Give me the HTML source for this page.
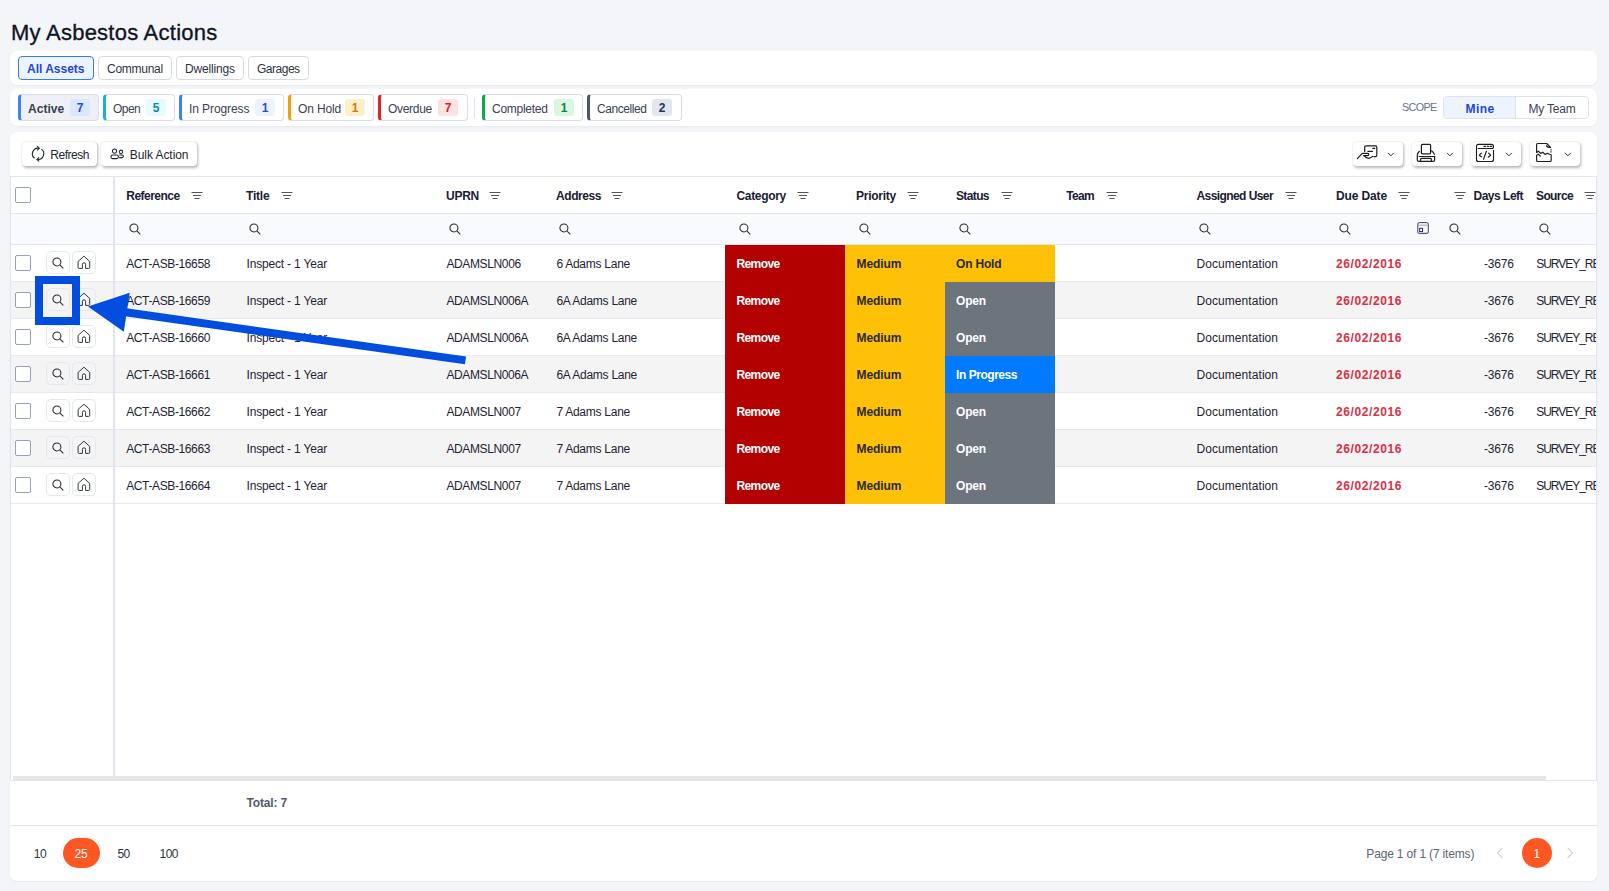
<!DOCTYPE html><html><head><meta charset="utf-8"><style>
*{box-sizing:border-box}
html,body{margin:0;padding:0}
body{width:1609px;height:891px;background:#f4f5f9;font-family:"Liberation Sans",sans-serif;position:relative;overflow:hidden;color:#1e2433}
.abs{position:absolute}
.t{position:absolute;white-space:nowrap;font-size:12px;line-height:14px}
.card{position:absolute;left:10px;width:1587px;background:#fff;border-radius:7px;box-shadow:0 1px 2px rgba(30,40,70,.06)}
h1{position:absolute;left:11px;top:20px;margin:0;font-size:22px;font-weight:400;line-height:26px;color:#0f1526;letter-spacing:0.25px;-webkit-text-stroke:0.35px #0f1526;white-space:nowrap}
.tab{position:absolute;top:5px;height:24px;border:1px solid #d5d9e2;border-radius:4px}
.tab.on{border-color:#3b7bf0;background:#eef4ff}
.st{position:absolute;top:5px;height:27px;border:1px solid #d9dde6;border-left-width:3px;border-radius:4px}
.bd{position:absolute;top:9px;height:17px;border-radius:3px;font-size:12px;font-weight:700;line-height:18px;text-align:center}
.btn{position:absolute;top:10px;height:24px;background:#fff;border-radius:4px;box-shadow:1px 1.5px 3px rgba(0,0,0,.28),0 0 1px rgba(0,0,0,.12)}
.grid{position:absolute;left:0;top:44px;width:1587px;height:604px;border-top:1px solid #e3e6ee;border-right:1px solid #e3e6ee;overflow:hidden}
.hd{font-weight:700;color:#1a2035}
.rowl{position:absolute;left:0;width:1587px;height:37px;border-bottom:1px solid #e6e9f0}
.cb{position:absolute;width:16px;height:16px;border:1px solid #97a0bd;border-radius:2px;background:#fff}
.ib{position:absolute;width:24px;height:23px;border:1px solid #e4e8f0;border-radius:5px}
.ib svg{position:absolute}
.cc{position:absolute;height:37px}
</style></head><body>

<h1>My Asbestos Actions</h1>
<div class="card" style="top:51px;height:34px">
<div class="tab on" style="left:8px;width:76px"></div>
<div class="t" style="left:17px;top:11.14px;font-size:12px;line-height:14px;font-weight:700;color:#1f46d8;letter-spacing:-0.008px">All Assets</div>
<div class="tab" style="left:88px;width:74px"></div>
<div class="t" style="left:97px;top:11.14px;font-size:12px;line-height:14px;color:#2b3345;letter-spacing:-0.265px">Communal</div>
<div class="tab" style="left:166px;width:68px"></div>
<div class="t" style="left:175px;top:11.14px;font-size:12px;line-height:14px;color:#2b3345;letter-spacing:-0.184px">Dwellings</div>
<div class="tab" style="left:238px;width:61px"></div>
<div class="t" style="left:247px;top:11.14px;font-size:12px;line-height:14px;color:#2b3345;letter-spacing:-0.49px">Garages</div>
</div>
<div class="card" style="top:89px;height:37px">
<div class="st" style="left:8px;width:81px;border-left-color:#3b82f6;background:#eef0f5"></div>
<div class="t" style="left:18px;top:12.94px;font-size:12px;line-height:14px;font-weight:700;color:#374151;letter-spacing:0.047px">Active</div>
<div class="bd" style="left:60px;width:20px;top:10px;background:#dbe7fd;color:#1e4fd8">7</div>
<div class="st" style="left:93px;width:72px;border-left-color:#17b3cf;background:#fff"></div>
<div class="t" style="left:103px;top:12.94px;font-size:12px;line-height:14px;color:#3a4254;letter-spacing:-0.564px">Open</div>
<div class="bd" style="left:136px;width:20px;top:10px;background:#e6fbfd;color:#0f8aa0">5</div>
<div class="st" style="left:169px;width:105px;border-left-color:#3b82f6;background:#fff"></div>
<div class="t" style="left:179px;top:12.94px;font-size:12px;line-height:14px;color:#3a4254;letter-spacing:-0.087px">In Progress</div>
<div class="bd" style="left:245px;width:20px;top:10px;background:#edf3fe;color:#1e4fd8">1</div>
<div class="st" style="left:278px;width:86px;border-left-color:#f59e0b;background:#fff"></div>
<div class="t" style="left:288px;top:12.94px;font-size:12px;line-height:14px;color:#3a4254;letter-spacing:-0.146px">On Hold</div>
<div class="bd" style="left:335px;width:20px;top:10px;background:#fdf0c8;color:#d97706">1</div>
<div class="st" style="left:368px;width:90px;border-left-color:#e02424;background:#fff"></div>
<div class="t" style="left:378px;top:12.94px;font-size:12px;line-height:14px;color:#3a4254;letter-spacing:-0.304px">Overdue</div>
<div class="bd" style="left:428px;width:20px;top:10px;background:#fde2e2;color:#d61f1f">7</div>
<div class="st" style="left:472px;width:101px;border-left-color:#16a34a;background:#fff"></div>
<div class="t" style="left:482px;top:12.94px;font-size:12px;line-height:14px;color:#3a4254;letter-spacing:-0.27px">Completed</div>
<div class="bd" style="left:544px;width:20px;top:10px;background:#d9f7e3;color:#15803d">1</div>
<div class="st" style="left:577px;width:95px;border-left-color:#475569;background:#fff"></div>
<div class="t" style="left:587px;top:12.94px;font-size:12px;line-height:14px;color:#3a4254;letter-spacing:-0.419px">Cancelled</div>
<div class="bd" style="left:642px;width:20px;top:10px;background:#e2e7ef;color:#27344a">2</div>
<div class="abs" style="left:464px;top:9px;width:1px;height:20px;background:#dfe2e8"></div>
<div class="t" style="left:1392px;top:12.36px;font-size:10.8px;line-height:13px;color:#64748b;letter-spacing:-0.642px">SCOPE</div>
<div class="abs" style="left:1433px;top:7px;width:146px;height:23px;border:1px solid #dfe3ea;border-radius:4px;overflow:hidden;background:#fff"><div class="abs" style="left:0;top:0;width:72px;height:21px;background:#edf4fe;border-right:1px solid #dfe3ea"></div></div>
<div class="t" style="left:1455.5px;top:12.64px;font-size:12px;line-height:14px;font-weight:700;color:#1f46d8;letter-spacing:0.416px">Mine</div>
<div class="t" style="left:1518.5px;top:12.64px;font-size:12px;line-height:14px;color:#3a4254;letter-spacing:-0.208px">My Team</div>
</div>
<div class="card" style="top:132px;height:749px">
<div class="btn" style="left:12px;width:75px"><span class="abs" style="left:9px;top:3px;line-height:0"><svg width="16" height="18" viewBox="0 0 16 18"><g stroke="#1e2433" stroke-width="1.1" fill="none"><path d="M3.5 13.3A5.7 5.7 0 0 1 7.6 3.2"/><path d="M10.4 4.1A5.7 5.7 0 0 1 6.6 14.4"/><path d="M6.1 1.1L8.3 3.2L6.2 5.4"/><path d="M8.1 12.3L5.9 14.4L8.2 16.4"/></g></svg></span></div>
<div class="t" style="left:40.3px;top:16.04px;font-size:12px;line-height:14px;letter-spacing:-0.489px">Refresh</div>
<div class="btn" style="left:91px;width:96px"><span class="abs" style="left:9px;top:6px;line-height:0"><svg width="16" height="13" viewBox="0 0 16 13"><g stroke="#1e2433" stroke-width="1.05" fill="none"><circle cx="4.5" cy="3.1" r="2.1"/><rect x="0.9" y="6.9" width="7.5" height="3.7" rx="1.85"/><circle cx="11" cy="3.8" r="1.7"/><path d="M9.2 7H12.1A1.3 1.3 0 0 1 12.1 9.6H9.2"/></g></svg></span></div>
<div class="t" style="left:119.69999999999999px;top:16.04px;font-size:12px;line-height:14px;letter-spacing:-0.052px">Bulk Action</div>
<div class="btn" style="left:1343px;width:50px"><span class="abs" style="left:2px;top:1px;line-height:0"><svg width="25" height="19" viewBox="0 0 25 19"><g stroke="#1e1e1e" stroke-width="1.2" fill="none" stroke-linecap="round" stroke-linejoin="round"><path d="M9.7 8.5V4.2Q9.7 2.9 11 2.9H20.5Q21.8 2.9 21.8 4.2V12.5Q21.8 13.7 20.5 13.7H18.8"/><path d="M17.8 5.4H19.6M12.9 8.3H17.6"/><path d="M2.3 15.6L7.3 10.4H12.6Q13.8 10.4 13.8 11.5Q13.8 12.6 12.6 12.6H8.5"/><path d="M9.4 12.9Q11 15.3 13.5 15.3Q15.8 15.3 17.6 13.4"/></g></svg></span><span class="abs" style="left:34px;top:10px;line-height:0"><svg width="8" height="5" viewBox="0 0 8 5"><path d="M1 0.9L3.9 3.8L6.8 0.9" stroke="#2a3040" stroke-width="1" fill="none"/></svg></span></div>
<div class="btn" style="left:1402px;width:50px"><span class="abs" style="left:2px;top:0px;line-height:0"><svg width="25" height="22" viewBox="0 0 25 22"><g stroke="#1e1e1e" stroke-width="1.2" fill="none" stroke-linecap="round" stroke-linejoin="round"><rect x="7.4" y="2.4" width="9.2" height="9.4" rx="1"/><path d="M5.4 9.3Q3.3 11 3.3 13.5V18Q3.3 19.3 4.6 19.3H19.3Q20.6 19.3 20.6 18V14.5M20.4 12.4Q19.6 10.2 17.5 8.8"/><path d="M5.2 14.5H20.8"/><path d="M6.5 19.3V17.4Q6.5 16.4 7.5 16.4H16.4Q17.4 16.4 17.4 17.4V19.3"/></g></svg></span><span class="abs" style="left:34px;top:10px;line-height:0"><svg width="8" height="5" viewBox="0 0 8 5"><path d="M1 0.9L3.9 3.8L6.8 0.9" stroke="#2a3040" stroke-width="1" fill="none"/></svg></span></div>
<div class="btn" style="left:1461px;width:50px"><span class="abs" style="left:2px;top:0px;line-height:0"><svg width="25" height="22" viewBox="0 0 25 22"><g stroke="#1e1e1e" stroke-width="1.15" fill="none" stroke-linecap="round" stroke-linejoin="round"><path d="M20.5 8.2V17.5Q20.5 19.5 18.5 19.5H5.5Q3.5 19.5 3.5 17.5V4.3Q3.5 2.3 5.5 2.3H18.5Q20.5 2.3 20.5 4.4Q20.5 6.5 18.5 6.5H5.2"/><path d="M11 4.4H12.4M14.2 4.4H15.4M17.2 4.4H18.5"/><path d="M8.4 11.2L6.3 13.2L8.4 14.8M15.6 11.2L17.6 13.2L15.2 15.2M13.4 9.2L10.5 17.2"/></g></svg></span><span class="abs" style="left:34px;top:10px;line-height:0"><svg width="8" height="5" viewBox="0 0 8 5"><path d="M1 0.9L3.9 3.8L6.8 0.9" stroke="#2a3040" stroke-width="1" fill="none"/></svg></span></div>
<div class="btn" style="left:1520px;width:50px"><span class="abs" style="left:2px;top:-1px;line-height:0"><svg width="25" height="24" viewBox="0 0 25 24"><g stroke="#1e1e1e" stroke-width="1.15" fill="none" stroke-linecap="round" stroke-linejoin="round"><path d="M4.6 11.5V3.5Q4.6 2.5 5.6 2.5H14.7L18.6 6.5"/><path d="M14.5 4.6Q14.6 6.3 18.4 6.5"/><path d="M19 8.2V11.3" stroke-dasharray="1 1.2" stroke-width="0.9"/><path d="M4.6 11.5L6.3 10.2L8.8 12.5L10.7 11.2L13.3 13.5L15.2 12.2L17.5 13.3L19.2 13.8V19.5Q19.2 20.5 18.2 20.5H5.6Q4.6 20.5 4.6 19.5V14.3L6.3 13.2L8.4 15.1"/></g></svg></span><span class="abs" style="left:34px;top:10px;line-height:0"><svg width="8" height="5" viewBox="0 0 8 5"><path d="M1 0.9L3.9 3.8L6.8 0.9" stroke="#2a3040" stroke-width="1" fill="none"/></svg></span></div>
<div class="grid">
<div class="rowl" style="top:0;height:37px;border-bottom:1px solid #e2e6ee"></div>
<div class="rowl" style="top:37px;height:31px;background:#f9fafd;border-bottom:1px solid #e2e6ee"></div>
<div class="rowl" style="top:68px;background:#fff"></div>
<div class="rowl" style="top:105px;background:#f4f4f4"></div>
<div class="rowl" style="top:142px;background:#fff"></div>
<div class="rowl" style="top:179px;background:#f4f4f4"></div>
<div class="rowl" style="top:216px;background:#fff"></div>
<div class="rowl" style="top:253px;background:#f4f4f4"></div>
<div class="rowl" style="top:290px;background:#fff"></div>
<div class="abs" style="left:103px;top:0;width:2px;height:604px;background:#e1e4ed"></div>
<div class="abs" style="left:0;top:0;width:1px;height:604px;background:#e3e6ee"></div>
<div class="cb" style="left:5px;top:10px"></div>
<div class="t" style="left:116.3px;top:12.14px;font-size:12px;line-height:14px;font-weight:700;color:#1a2035;letter-spacing:-0.526px">Reference</div>
<span class="abs" style="left:181px;top:15px;line-height:0"><svg width="12" height="8" viewBox="0 0 12 8"><path d="M0.5 0.5h11M2 3.5h8M3.5 6.5h5" stroke="#555" stroke-width="1" fill="none"/></svg></span>
<div class="t" style="left:236px;top:12.14px;font-size:12px;line-height:14px;font-weight:700;color:#1a2035;letter-spacing:-0.191px">Title</div>
<span class="abs" style="left:271px;top:15px;line-height:0"><svg width="12" height="8" viewBox="0 0 12 8"><path d="M0.5 0.5h11M2 3.5h8M3.5 6.5h5" stroke="#555" stroke-width="1" fill="none"/></svg></span>
<div class="t" style="left:436px;top:12.14px;font-size:12px;line-height:14px;font-weight:700;color:#1a2035;letter-spacing:-0.251px">UPRN</div>
<span class="abs" style="left:479px;top:15px;line-height:0"><svg width="12" height="8" viewBox="0 0 12 8"><path d="M0.5 0.5h11M2 3.5h8M3.5 6.5h5" stroke="#555" stroke-width="1" fill="none"/></svg></span>
<div class="t" style="left:546px;top:12.14px;font-size:12px;line-height:14px;font-weight:700;color:#1a2035;letter-spacing:-0.431px">Address</div>
<span class="abs" style="left:601px;top:15px;line-height:0"><svg width="12" height="8" viewBox="0 0 12 8"><path d="M0.5 0.5h11M2 3.5h8M3.5 6.5h5" stroke="#555" stroke-width="1" fill="none"/></svg></span>
<div class="t" style="left:726.4px;top:12.14px;font-size:12px;line-height:14px;font-weight:700;color:#1a2035;letter-spacing:-0.302px">Category</div>
<span class="abs" style="left:787px;top:15px;line-height:0"><svg width="12" height="8" viewBox="0 0 12 8"><path d="M0.5 0.5h11M2 3.5h8M3.5 6.5h5" stroke="#555" stroke-width="1" fill="none"/></svg></span>
<div class="t" style="left:846.1px;top:12.14px;font-size:12px;line-height:14px;font-weight:700;color:#1a2035;letter-spacing:-0.277px">Priority</div>
<span class="abs" style="left:897px;top:15px;line-height:0"><svg width="12" height="8" viewBox="0 0 12 8"><path d="M0.5 0.5h11M2 3.5h8M3.5 6.5h5" stroke="#555" stroke-width="1" fill="none"/></svg></span>
<div class="t" style="left:946px;top:12.14px;font-size:12px;line-height:14px;font-weight:700;color:#1a2035;letter-spacing:-0.629px">Status</div>
<span class="abs" style="left:991px;top:15px;line-height:0"><svg width="12" height="8" viewBox="0 0 12 8"><path d="M0.5 0.5h11M2 3.5h8M3.5 6.5h5" stroke="#555" stroke-width="1" fill="none"/></svg></span>
<div class="t" style="left:1056.2px;top:12.14px;font-size:12px;line-height:14px;font-weight:700;color:#1a2035;letter-spacing:-0.665px">Team</div>
<span class="abs" style="left:1096px;top:15px;line-height:0"><svg width="12" height="8" viewBox="0 0 12 8"><path d="M0.5 0.5h11M2 3.5h8M3.5 6.5h5" stroke="#555" stroke-width="1" fill="none"/></svg></span>
<div class="t" style="left:1186.5px;top:12.14px;font-size:12px;line-height:14px;font-weight:700;color:#1a2035;letter-spacing:-0.58px">Assigned User</div>
<span class="abs" style="left:1275px;top:15px;line-height:0"><svg width="12" height="8" viewBox="0 0 12 8"><path d="M0.5 0.5h11M2 3.5h8M3.5 6.5h5" stroke="#555" stroke-width="1" fill="none"/></svg></span>
<div class="t" style="left:1326px;top:12.14px;font-size:12px;line-height:14px;font-weight:700;color:#1a2035;letter-spacing:-0.127px">Due Date</div>
<span class="abs" style="left:1388px;top:15px;line-height:0"><svg width="12" height="8" viewBox="0 0 12 8"><path d="M0.5 0.5h11M2 3.5h8M3.5 6.5h5" stroke="#555" stroke-width="1" fill="none"/></svg></span>
<div class="t" style="left:1463.5px;top:12.14px;font-size:12px;line-height:14px;font-weight:700;color:#1a2035;letter-spacing:-0.491px">Days Left</div>
<span class="abs" style="left:1444px;top:15px;line-height:0"><svg width="12" height="8" viewBox="0 0 12 8"><path d="M0.5 0.5h11M2 3.5h8M3.5 6.5h5" stroke="#555" stroke-width="1" fill="none"/></svg></span>
<div class="t" style="left:1526px;top:12.14px;font-size:12px;line-height:14px;font-weight:700;color:#1a2035;letter-spacing:-0.614px">Source</div>
<span class="abs" style="left:1574px;top:15px;line-height:0"><svg width="12" height="8" viewBox="0 0 12 8"><path d="M0.5 0.5h11M2 3.5h8M3.5 6.5h5" stroke="#555" stroke-width="1" fill="none"/></svg></span>
<span class="abs" style="left:119px;top:46px;line-height:0"><svg width="13" height="13" viewBox="0 0 13 13"><circle cx="4.9" cy="4.9" r="4" stroke="#262b36" stroke-width="1.05" fill="none"/><path d="M7.8 7.8L11.3 11.3" stroke="#262b36" stroke-width="1.05"/></svg></span>
<span class="abs" style="left:239px;top:46px;line-height:0"><svg width="13" height="13" viewBox="0 0 13 13"><circle cx="4.9" cy="4.9" r="4" stroke="#262b36" stroke-width="1.05" fill="none"/><path d="M7.8 7.8L11.3 11.3" stroke="#262b36" stroke-width="1.05"/></svg></span>
<span class="abs" style="left:439px;top:46px;line-height:0"><svg width="13" height="13" viewBox="0 0 13 13"><circle cx="4.9" cy="4.9" r="4" stroke="#262b36" stroke-width="1.05" fill="none"/><path d="M7.8 7.8L11.3 11.3" stroke="#262b36" stroke-width="1.05"/></svg></span>
<span class="abs" style="left:549px;top:46px;line-height:0"><svg width="13" height="13" viewBox="0 0 13 13"><circle cx="4.9" cy="4.9" r="4" stroke="#262b36" stroke-width="1.05" fill="none"/><path d="M7.8 7.8L11.3 11.3" stroke="#262b36" stroke-width="1.05"/></svg></span>
<span class="abs" style="left:729px;top:46px;line-height:0"><svg width="13" height="13" viewBox="0 0 13 13"><circle cx="4.9" cy="4.9" r="4" stroke="#262b36" stroke-width="1.05" fill="none"/><path d="M7.8 7.8L11.3 11.3" stroke="#262b36" stroke-width="1.05"/></svg></span>
<span class="abs" style="left:849px;top:46px;line-height:0"><svg width="13" height="13" viewBox="0 0 13 13"><circle cx="4.9" cy="4.9" r="4" stroke="#262b36" stroke-width="1.05" fill="none"/><path d="M7.8 7.8L11.3 11.3" stroke="#262b36" stroke-width="1.05"/></svg></span>
<span class="abs" style="left:949px;top:46px;line-height:0"><svg width="13" height="13" viewBox="0 0 13 13"><circle cx="4.9" cy="4.9" r="4" stroke="#262b36" stroke-width="1.05" fill="none"/><path d="M7.8 7.8L11.3 11.3" stroke="#262b36" stroke-width="1.05"/></svg></span>
<span class="abs" style="left:1189px;top:46px;line-height:0"><svg width="13" height="13" viewBox="0 0 13 13"><circle cx="4.9" cy="4.9" r="4" stroke="#262b36" stroke-width="1.05" fill="none"/><path d="M7.8 7.8L11.3 11.3" stroke="#262b36" stroke-width="1.05"/></svg></span>
<span class="abs" style="left:1329px;top:46px;line-height:0"><svg width="13" height="13" viewBox="0 0 13 13"><circle cx="4.9" cy="4.9" r="4" stroke="#262b36" stroke-width="1.05" fill="none"/><path d="M7.8 7.8L11.3 11.3" stroke="#262b36" stroke-width="1.05"/></svg></span>
<span class="abs" style="left:1439px;top:46px;line-height:0"><svg width="13" height="13" viewBox="0 0 13 13"><circle cx="4.9" cy="4.9" r="4" stroke="#262b36" stroke-width="1.05" fill="none"/><path d="M7.8 7.8L11.3 11.3" stroke="#262b36" stroke-width="1.05"/></svg></span>
<span class="abs" style="left:1529px;top:46px;line-height:0"><svg width="13" height="13" viewBox="0 0 13 13"><circle cx="4.9" cy="4.9" r="4" stroke="#262b36" stroke-width="1.05" fill="none"/><path d="M7.8 7.8L11.3 11.3" stroke="#262b36" stroke-width="1.05"/></svg></span>
<span class="abs" style="left:1407px;top:45px;line-height:0"><svg width="13" height="13" viewBox="0 0 13 13"><g fill="none"><rect x="0.8" y="0.6" width="10.5" height="11" rx="1.6" stroke="#3a4256" stroke-width="1"/><path d="M1.5 3.2H10.8" stroke="#9aa1b0" stroke-width="1"/><path d="M1.5 10.8H10.8" stroke="#9aa1b0" stroke-width="0.8"/><rect x="2.6" y="6.3" width="3" height="3.2" stroke="#3a2a6a" stroke-width="1"/></g></svg></span>
<div class="cb" style="left:5px;top:78px"></div>
<div class="ib" style="left:36px;top:74px"><span class="abs" style="left:5px;top:5px;line-height:0"><svg width="13" height="13" viewBox="0 0 13 13"><circle cx="4.9" cy="4.9" r="4" stroke="#262b36" stroke-width="1.05" fill="none"/><path d="M7.8 7.8L11.3 11.3" stroke="#262b36" stroke-width="1.05"/></svg></span></div>
<div class="ib" style="left:62px;top:74px"><span class="abs" style="left:4px;top:3px;line-height:0"><svg width="14" height="15" viewBox="0 0 14 15"><path d="M1.1 6.4L6.9 1.2L12.7 6.4V12.4Q12.7 13.4 11.7 13.4H8.6V9.4A1.6 1.6 0 0 0 5.4 9.4V13.4H2.1Q1.1 13.4 1.1 12.4Z" stroke="#262b36" stroke-width="0.95" fill="none" stroke-linejoin="round"/></svg></span></div>
<div class="t" style="left:116.2px;top:80.14px;font-size:12px;line-height:14px;letter-spacing:-0.378px">ACT-ASB-16658</div>
<div class="t" style="left:236.5px;top:80.14px;font-size:12px;line-height:14px;letter-spacing:-0.181px">Inspect - 1 Year</div>
<div class="t" style="left:436.4px;top:80.14px;font-size:12px;line-height:14px;letter-spacing:-0.364px">ADAMSLN006</div>
<div class="t" style="left:546.4px;top:80.14px;font-size:12px;line-height:14px;letter-spacing:-0.261px">6 Adams Lane</div>
<div class="cc" style="left:715px;top:68px;width:120px;background:#b30000"></div>
<div class="cc" style="left:835px;top:68px;width:100px;background:#ffc107"></div>
<div class="cc" style="left:935px;top:68px;width:110px;background:#ffc107"></div>
<div class="t" style="left:726.4px;top:80.14px;font-size:12px;line-height:14px;font-weight:700;color:#fff;letter-spacing:-0.582px">Remove</div>
<div class="t" style="left:846.6px;top:80.14px;font-size:12px;line-height:14px;font-weight:700;color:#2a2a2a;letter-spacing:-0.089px">Medium</div>
<div class="t" style="left:946px;top:80.14px;font-size:12px;line-height:14px;font-weight:700;color:#2a2a2a;letter-spacing:-0.194px">On Hold</div>
<div class="t" style="left:1186.5px;top:80.14px;font-size:12px;line-height:14px;letter-spacing:0.068px">Documentation</div>
<div class="t" style="left:1326px;top:80.14px;font-size:12px;line-height:14px;font-weight:700;color:#dc2f45;letter-spacing:0.594px">26/02/2016</div>
<div class="t" style="left:1474px;top:80.14px;font-size:12px;line-height:14px;letter-spacing:-0.219px">-3676</div>
<div class="t" style="left:1526.2px;top:80.14px;font-size:12px;line-height:14px;letter-spacing:-1.02px">SURVEY_REPORT</div>
<div class="cb" style="left:5px;top:115px"></div>
<div class="ib" style="left:36px;top:111px"><span class="abs" style="left:5px;top:5px;line-height:0"><svg width="13" height="13" viewBox="0 0 13 13"><circle cx="4.9" cy="4.9" r="4" stroke="#262b36" stroke-width="1.05" fill="none"/><path d="M7.8 7.8L11.3 11.3" stroke="#262b36" stroke-width="1.05"/></svg></span></div>
<div class="ib" style="left:62px;top:111px"><span class="abs" style="left:4px;top:3px;line-height:0"><svg width="14" height="15" viewBox="0 0 14 15"><path d="M1.1 6.4L6.9 1.2L12.7 6.4V12.4Q12.7 13.4 11.7 13.4H8.6V9.4A1.6 1.6 0 0 0 5.4 9.4V13.4H2.1Q1.1 13.4 1.1 12.4Z" stroke="#262b36" stroke-width="0.95" fill="none" stroke-linejoin="round"/></svg></span></div>
<div class="t" style="left:116.2px;top:117.14px;font-size:12px;line-height:14px;letter-spacing:-0.378px">ACT-ASB-16659</div>
<div class="t" style="left:236.5px;top:117.14px;font-size:12px;line-height:14px;letter-spacing:-0.181px">Inspect - 1 Year</div>
<div class="t" style="left:436.4px;top:117.14px;font-size:12px;line-height:14px;letter-spacing:-0.382px">ADAMSLN006A</div>
<div class="t" style="left:546.4px;top:117.14px;font-size:12px;line-height:14px;letter-spacing:-0.264px">6A Adams Lane</div>
<div class="cc" style="left:715px;top:105px;width:120px;background:#b30000"></div>
<div class="cc" style="left:835px;top:105px;width:100px;background:#ffc107"></div>
<div class="cc" style="left:935px;top:105px;width:110px;background:#6c757d"></div>
<div class="t" style="left:726.4px;top:117.14px;font-size:12px;line-height:14px;font-weight:700;color:#fff;letter-spacing:-0.582px">Remove</div>
<div class="t" style="left:846.6px;top:117.14px;font-size:12px;line-height:14px;font-weight:700;color:#2a2a2a;letter-spacing:-0.089px">Medium</div>
<div class="t" style="left:946px;top:117.14px;font-size:12px;line-height:14px;font-weight:700;color:#ffffff;letter-spacing:-0.192px">Open</div>
<div class="t" style="left:1186.5px;top:117.14px;font-size:12px;line-height:14px;letter-spacing:0.068px">Documentation</div>
<div class="t" style="left:1326px;top:117.14px;font-size:12px;line-height:14px;font-weight:700;color:#dc2f45;letter-spacing:0.594px">26/02/2016</div>
<div class="t" style="left:1474px;top:117.14px;font-size:12px;line-height:14px;letter-spacing:-0.219px">-3676</div>
<div class="t" style="left:1526.2px;top:117.14px;font-size:12px;line-height:14px;letter-spacing:-1.02px">SURVEY_REPORT</div>
<div class="cb" style="left:5px;top:152px"></div>
<div class="ib" style="left:36px;top:148px"><span class="abs" style="left:5px;top:5px;line-height:0"><svg width="13" height="13" viewBox="0 0 13 13"><circle cx="4.9" cy="4.9" r="4" stroke="#262b36" stroke-width="1.05" fill="none"/><path d="M7.8 7.8L11.3 11.3" stroke="#262b36" stroke-width="1.05"/></svg></span></div>
<div class="ib" style="left:62px;top:148px"><span class="abs" style="left:4px;top:3px;line-height:0"><svg width="14" height="15" viewBox="0 0 14 15"><path d="M1.1 6.4L6.9 1.2L12.7 6.4V12.4Q12.7 13.4 11.7 13.4H8.6V9.4A1.6 1.6 0 0 0 5.4 9.4V13.4H2.1Q1.1 13.4 1.1 12.4Z" stroke="#262b36" stroke-width="0.95" fill="none" stroke-linejoin="round"/></svg></span></div>
<div class="t" style="left:116.2px;top:154.14px;font-size:12px;line-height:14px;letter-spacing:-0.378px">ACT-ASB-16660</div>
<div class="t" style="left:236.5px;top:154.14px;font-size:12px;line-height:14px;letter-spacing:-0.181px">Inspect - 1 Year</div>
<div class="t" style="left:436.4px;top:154.14px;font-size:12px;line-height:14px;letter-spacing:-0.382px">ADAMSLN006A</div>
<div class="t" style="left:546.4px;top:154.14px;font-size:12px;line-height:14px;letter-spacing:-0.264px">6A Adams Lane</div>
<div class="cc" style="left:715px;top:142px;width:120px;background:#b30000"></div>
<div class="cc" style="left:835px;top:142px;width:100px;background:#ffc107"></div>
<div class="cc" style="left:935px;top:142px;width:110px;background:#6c757d"></div>
<div class="t" style="left:726.4px;top:154.14px;font-size:12px;line-height:14px;font-weight:700;color:#fff;letter-spacing:-0.582px">Remove</div>
<div class="t" style="left:846.6px;top:154.14px;font-size:12px;line-height:14px;font-weight:700;color:#2a2a2a;letter-spacing:-0.089px">Medium</div>
<div class="t" style="left:946px;top:154.14px;font-size:12px;line-height:14px;font-weight:700;color:#ffffff;letter-spacing:-0.192px">Open</div>
<div class="t" style="left:1186.5px;top:154.14px;font-size:12px;line-height:14px;letter-spacing:0.068px">Documentation</div>
<div class="t" style="left:1326px;top:154.14px;font-size:12px;line-height:14px;font-weight:700;color:#dc2f45;letter-spacing:0.594px">26/02/2016</div>
<div class="t" style="left:1474px;top:154.14px;font-size:12px;line-height:14px;letter-spacing:-0.219px">-3676</div>
<div class="t" style="left:1526.2px;top:154.14px;font-size:12px;line-height:14px;letter-spacing:-1.02px">SURVEY_REPORT</div>
<div class="cb" style="left:5px;top:189px"></div>
<div class="ib" style="left:36px;top:185px"><span class="abs" style="left:5px;top:5px;line-height:0"><svg width="13" height="13" viewBox="0 0 13 13"><circle cx="4.9" cy="4.9" r="4" stroke="#262b36" stroke-width="1.05" fill="none"/><path d="M7.8 7.8L11.3 11.3" stroke="#262b36" stroke-width="1.05"/></svg></span></div>
<div class="ib" style="left:62px;top:185px"><span class="abs" style="left:4px;top:3px;line-height:0"><svg width="14" height="15" viewBox="0 0 14 15"><path d="M1.1 6.4L6.9 1.2L12.7 6.4V12.4Q12.7 13.4 11.7 13.4H8.6V9.4A1.6 1.6 0 0 0 5.4 9.4V13.4H2.1Q1.1 13.4 1.1 12.4Z" stroke="#262b36" stroke-width="0.95" fill="none" stroke-linejoin="round"/></svg></span></div>
<div class="t" style="left:116.2px;top:191.14px;font-size:12px;line-height:14px;letter-spacing:-0.378px">ACT-ASB-16661</div>
<div class="t" style="left:236.5px;top:191.14px;font-size:12px;line-height:14px;letter-spacing:-0.181px">Inspect - 1 Year</div>
<div class="t" style="left:436.4px;top:191.14px;font-size:12px;line-height:14px;letter-spacing:-0.382px">ADAMSLN006A</div>
<div class="t" style="left:546.4px;top:191.14px;font-size:12px;line-height:14px;letter-spacing:-0.264px">6A Adams Lane</div>
<div class="cc" style="left:715px;top:179px;width:120px;background:#b30000"></div>
<div class="cc" style="left:835px;top:179px;width:100px;background:#ffc107"></div>
<div class="cc" style="left:935px;top:179px;width:110px;background:#007bff"></div>
<div class="t" style="left:726.4px;top:191.14px;font-size:12px;line-height:14px;font-weight:700;color:#fff;letter-spacing:-0.582px">Remove</div>
<div class="t" style="left:846.6px;top:191.14px;font-size:12px;line-height:14px;font-weight:700;color:#2a2a2a;letter-spacing:-0.089px">Medium</div>
<div class="t" style="left:946px;top:191.14px;font-size:12px;line-height:14px;font-weight:700;color:#ffffff;letter-spacing:-0.457px">In Progress</div>
<div class="t" style="left:1186.5px;top:191.14px;font-size:12px;line-height:14px;letter-spacing:0.068px">Documentation</div>
<div class="t" style="left:1326px;top:191.14px;font-size:12px;line-height:14px;font-weight:700;color:#dc2f45;letter-spacing:0.594px">26/02/2016</div>
<div class="t" style="left:1474px;top:191.14px;font-size:12px;line-height:14px;letter-spacing:-0.219px">-3676</div>
<div class="t" style="left:1526.2px;top:191.14px;font-size:12px;line-height:14px;letter-spacing:-1.02px">SURVEY_REPORT</div>
<div class="cb" style="left:5px;top:226px"></div>
<div class="ib" style="left:36px;top:222px"><span class="abs" style="left:5px;top:5px;line-height:0"><svg width="13" height="13" viewBox="0 0 13 13"><circle cx="4.9" cy="4.9" r="4" stroke="#262b36" stroke-width="1.05" fill="none"/><path d="M7.8 7.8L11.3 11.3" stroke="#262b36" stroke-width="1.05"/></svg></span></div>
<div class="ib" style="left:62px;top:222px"><span class="abs" style="left:4px;top:3px;line-height:0"><svg width="14" height="15" viewBox="0 0 14 15"><path d="M1.1 6.4L6.9 1.2L12.7 6.4V12.4Q12.7 13.4 11.7 13.4H8.6V9.4A1.6 1.6 0 0 0 5.4 9.4V13.4H2.1Q1.1 13.4 1.1 12.4Z" stroke="#262b36" stroke-width="0.95" fill="none" stroke-linejoin="round"/></svg></span></div>
<div class="t" style="left:116.2px;top:228.14px;font-size:12px;line-height:14px;letter-spacing:-0.378px">ACT-ASB-16662</div>
<div class="t" style="left:236.5px;top:228.14px;font-size:12px;line-height:14px;letter-spacing:-0.181px">Inspect - 1 Year</div>
<div class="t" style="left:436.4px;top:228.14px;font-size:12px;line-height:14px;letter-spacing:-0.364px">ADAMSLN007</div>
<div class="t" style="left:546.4px;top:228.14px;font-size:12px;line-height:14px;letter-spacing:-0.261px">7 Adams Lane</div>
<div class="cc" style="left:715px;top:216px;width:120px;background:#b30000"></div>
<div class="cc" style="left:835px;top:216px;width:100px;background:#ffc107"></div>
<div class="cc" style="left:935px;top:216px;width:110px;background:#6c757d"></div>
<div class="t" style="left:726.4px;top:228.14px;font-size:12px;line-height:14px;font-weight:700;color:#fff;letter-spacing:-0.582px">Remove</div>
<div class="t" style="left:846.6px;top:228.14px;font-size:12px;line-height:14px;font-weight:700;color:#2a2a2a;letter-spacing:-0.089px">Medium</div>
<div class="t" style="left:946px;top:228.14px;font-size:12px;line-height:14px;font-weight:700;color:#ffffff;letter-spacing:-0.192px">Open</div>
<div class="t" style="left:1186.5px;top:228.14px;font-size:12px;line-height:14px;letter-spacing:0.068px">Documentation</div>
<div class="t" style="left:1326px;top:228.14px;font-size:12px;line-height:14px;font-weight:700;color:#dc2f45;letter-spacing:0.594px">26/02/2016</div>
<div class="t" style="left:1474px;top:228.14px;font-size:12px;line-height:14px;letter-spacing:-0.219px">-3676</div>
<div class="t" style="left:1526.2px;top:228.14px;font-size:12px;line-height:14px;letter-spacing:-1.02px">SURVEY_REPORT</div>
<div class="cb" style="left:5px;top:263px"></div>
<div class="ib" style="left:36px;top:259px"><span class="abs" style="left:5px;top:5px;line-height:0"><svg width="13" height="13" viewBox="0 0 13 13"><circle cx="4.9" cy="4.9" r="4" stroke="#262b36" stroke-width="1.05" fill="none"/><path d="M7.8 7.8L11.3 11.3" stroke="#262b36" stroke-width="1.05"/></svg></span></div>
<div class="ib" style="left:62px;top:259px"><span class="abs" style="left:4px;top:3px;line-height:0"><svg width="14" height="15" viewBox="0 0 14 15"><path d="M1.1 6.4L6.9 1.2L12.7 6.4V12.4Q12.7 13.4 11.7 13.4H8.6V9.4A1.6 1.6 0 0 0 5.4 9.4V13.4H2.1Q1.1 13.4 1.1 12.4Z" stroke="#262b36" stroke-width="0.95" fill="none" stroke-linejoin="round"/></svg></span></div>
<div class="t" style="left:116.2px;top:265.14px;font-size:12px;line-height:14px;letter-spacing:-0.378px">ACT-ASB-16663</div>
<div class="t" style="left:236.5px;top:265.14px;font-size:12px;line-height:14px;letter-spacing:-0.181px">Inspect - 1 Year</div>
<div class="t" style="left:436.4px;top:265.14px;font-size:12px;line-height:14px;letter-spacing:-0.364px">ADAMSLN007</div>
<div class="t" style="left:546.4px;top:265.14px;font-size:12px;line-height:14px;letter-spacing:-0.261px">7 Adams Lane</div>
<div class="cc" style="left:715px;top:253px;width:120px;background:#b30000"></div>
<div class="cc" style="left:835px;top:253px;width:100px;background:#ffc107"></div>
<div class="cc" style="left:935px;top:253px;width:110px;background:#6c757d"></div>
<div class="t" style="left:726.4px;top:265.14px;font-size:12px;line-height:14px;font-weight:700;color:#fff;letter-spacing:-0.582px">Remove</div>
<div class="t" style="left:846.6px;top:265.14px;font-size:12px;line-height:14px;font-weight:700;color:#2a2a2a;letter-spacing:-0.089px">Medium</div>
<div class="t" style="left:946px;top:265.14px;font-size:12px;line-height:14px;font-weight:700;color:#ffffff;letter-spacing:-0.192px">Open</div>
<div class="t" style="left:1186.5px;top:265.14px;font-size:12px;line-height:14px;letter-spacing:0.068px">Documentation</div>
<div class="t" style="left:1326px;top:265.14px;font-size:12px;line-height:14px;font-weight:700;color:#dc2f45;letter-spacing:0.594px">26/02/2016</div>
<div class="t" style="left:1474px;top:265.14px;font-size:12px;line-height:14px;letter-spacing:-0.219px">-3676</div>
<div class="t" style="left:1526.2px;top:265.14px;font-size:12px;line-height:14px;letter-spacing:-1.02px">SURVEY_REPORT</div>
<div class="cb" style="left:5px;top:300px"></div>
<div class="ib" style="left:36px;top:296px"><span class="abs" style="left:5px;top:5px;line-height:0"><svg width="13" height="13" viewBox="0 0 13 13"><circle cx="4.9" cy="4.9" r="4" stroke="#262b36" stroke-width="1.05" fill="none"/><path d="M7.8 7.8L11.3 11.3" stroke="#262b36" stroke-width="1.05"/></svg></span></div>
<div class="ib" style="left:62px;top:296px"><span class="abs" style="left:4px;top:3px;line-height:0"><svg width="14" height="15" viewBox="0 0 14 15"><path d="M1.1 6.4L6.9 1.2L12.7 6.4V12.4Q12.7 13.4 11.7 13.4H8.6V9.4A1.6 1.6 0 0 0 5.4 9.4V13.4H2.1Q1.1 13.4 1.1 12.4Z" stroke="#262b36" stroke-width="0.95" fill="none" stroke-linejoin="round"/></svg></span></div>
<div class="t" style="left:116.2px;top:302.14px;font-size:12px;line-height:14px;letter-spacing:-0.378px">ACT-ASB-16664</div>
<div class="t" style="left:236.5px;top:302.14px;font-size:12px;line-height:14px;letter-spacing:-0.181px">Inspect - 1 Year</div>
<div class="t" style="left:436.4px;top:302.14px;font-size:12px;line-height:14px;letter-spacing:-0.364px">ADAMSLN007</div>
<div class="t" style="left:546.4px;top:302.14px;font-size:12px;line-height:14px;letter-spacing:-0.261px">7 Adams Lane</div>
<div class="cc" style="left:715px;top:290px;width:120px;background:#b30000"></div>
<div class="cc" style="left:835px;top:290px;width:100px;background:#ffc107"></div>
<div class="cc" style="left:935px;top:290px;width:110px;background:#6c757d"></div>
<div class="t" style="left:726.4px;top:302.14px;font-size:12px;line-height:14px;font-weight:700;color:#fff;letter-spacing:-0.582px">Remove</div>
<div class="t" style="left:846.6px;top:302.14px;font-size:12px;line-height:14px;font-weight:700;color:#2a2a2a;letter-spacing:-0.089px">Medium</div>
<div class="t" style="left:946px;top:302.14px;font-size:12px;line-height:14px;font-weight:700;color:#ffffff;letter-spacing:-0.192px">Open</div>
<div class="t" style="left:1186.5px;top:302.14px;font-size:12px;line-height:14px;letter-spacing:0.068px">Documentation</div>
<div class="t" style="left:1326px;top:302.14px;font-size:12px;line-height:14px;font-weight:700;color:#dc2f45;letter-spacing:0.594px">26/02/2016</div>
<div class="t" style="left:1474px;top:302.14px;font-size:12px;line-height:14px;letter-spacing:-0.219px">-3676</div>
<div class="t" style="left:1526.2px;top:302.14px;font-size:12px;line-height:14px;letter-spacing:-1.02px">SURVEY_REPORT</div>
<div class="abs" style="left:3px;top:599px;width:1533px;height:5px;background:#e6e6e6"></div>
<div class="abs" style="left:103px;top:0;width:2px;height:604px;background:#e1e4ed"></div>
</div>
<div class="abs" style="left:0;top:648px;width:1587px;height:1px;background:#e3e6ee"></div>
<div class="t" style="left:236.5px;top:664.44px;font-size:12px;line-height:14px;font-weight:700;color:#51596b;letter-spacing:-0.147px">Total: 7</div>
<div class="abs" style="left:0;top:693px;width:1587px;height:1px;background:#e3e6ee"></div>
<div class="t" style="left:23.799999999999997px;top:714.54px;font-size:12px;line-height:14px;color:#2b3345;letter-spacing:-0.574px">10</div>
<div class="abs" style="left:53px;top:706px;width:37px;height:30px;border-radius:15px;background:#ff5722"></div>
<div class="t" style="left:64.5px;top:714.54px;font-size:12px;line-height:14px;color:#fff;letter-spacing:-0.174px">25</div>
<div class="t" style="left:107.4px;top:714.54px;font-size:12px;line-height:14px;color:#2b3345;letter-spacing:-0.524px">50</div>
<div class="t" style="left:149.6px;top:714.54px;font-size:12px;line-height:14px;color:#2b3345;letter-spacing:-0.541px">100</div>
<div class="t" style="left:1356.3px;top:714.84px;font-size:12px;line-height:14px;color:#5b6477;letter-spacing:-0.162px">Page 1 of 1 (7 items)</div>
<svg class="abs" style="left:1486px;top:715px" width="8" height="12" viewBox="0 0 8 12"><path d="M6.5 0.8L1.5 6L6.5 11.2" stroke="#b8bcc6" stroke-width="1" fill="none"/></svg>
<div class="abs" style="left:1512px;top:706px;width:30px;height:30px;border-radius:15px;background:#ff5722"></div>
<div class="t" style="left:1523.5px;top:714.54px;font-size:12px;line-height:14px;color:#fff;letter-spacing:0.326px">1</div>
<svg class="abs" style="left:1556px;top:715px" width="8" height="12" viewBox="0 0 8 12"><path d="M1.5 0.8L6.5 6L1.5 11.2" stroke="#b8bcc6" stroke-width="1" fill="none"/></svg>
</div>
<svg class="abs" style="left:0;top:0" width="1609" height="891" viewBox="0 0 1609 891">
<rect x="39" y="280" width="37" height="41" fill="none" stroke="#004de0" stroke-width="8"/>
<line x1="465.5" y1="360.4" x2="124" y2="312" stroke="#004de0" stroke-width="8"/>
<polygon points="88,306.5 129.7,292.8 123.8,331.7" fill="#004de0"/>
</svg>
</body></html>
